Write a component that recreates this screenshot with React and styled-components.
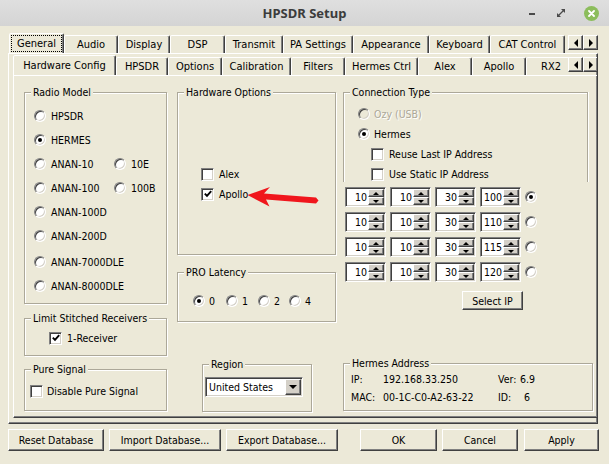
import styled, { createGlobalStyle, css } from 'styled-components';

const beige = '#ece9d8';

const GlobalStyle = createGlobalStyle`
  * { box-sizing: border-box; }
  html, body { margin: 0; padding: 0; background: ${beige}; }
  body {
    font-family: "DejaVu Sans Condensed", "DejaVu Sans", sans-serif;
    font-stretch: condensed;
    font-size: 10.5px;
    color: #000;
  }
`;

const sunken = css`
  border: 1px solid;
  border-color: #808080 #fff #fff #808080;
  box-shadow: inset 1px 1px 0 #404040, inset -1px -1px 0 #d4d0c8;
`;

const raised = css`
  border: 1px solid;
  border-color: #fff #404040 #404040 #fff;
  box-shadow: inset -1px -1px 0 #808080;
`;

const Window = styled.div`
  position: relative;
  width: 609px;
  height: 464px;
  display: flex;
  flex-direction: column;
  background: ${beige};
  overflow: hidden;
`;

const TitleBar = styled.div`
  flex: none;
  height: 26px;
  display: grid;
  grid-template-columns: 1fr auto 1fr;
  align-items: center;
  background: linear-gradient(#dfdfdf, #d4d4d4);
`;

const Title = styled.div`
  grid-column: 2;
  font-family: "Noto Sans", "DejaVu Sans", sans-serif;
  font-weight: 700;
  font-size: 13px;
  color: #3c3c3c;
`;

const WinButtons = styled.div`
  grid-column: 3;
  justify-self: end;
  display: flex;
  align-items: center;
  padding-right: 10px;
`;

const Minimize = styled.span`
  width: 6px;
  height: 2px;
  background: #4a4a4a;
  margin-right: 22px;
  margin-top: 2px;
`;

const CloseBall = styled.span`
  width: 15px;
  height: 15px;
  border-radius: 50%;
  background: #8cbd5c;
  margin-left: 19px;
  display: flex;
  align-items: center;
  justify-content: center;
`;

const Body = styled.div`
  flex: none;
  padding: 7px 11px 0 8px;
`;

const TabStrip = styled.div`
  position: relative;
  z-index: 1;
  display: flex;
  align-items: flex-end;
  height: 20px;
  padding-left: ${p => p.$inset || 0}px;
`;

const TabList = styled.div`
  display: flex;
  align-items: flex-end;
  width: ${p => p.$w}px;
  height: 100%;
  overflow: hidden;
  flex: none;
`;

const Tab = styled.div`
  flex: none;
  width: ${p => p.$w}px;
  height: ${p => (p.$active ? 21 : 18)}px;
  margin-bottom: ${p => (p.$active ? -1 : 0)}px;
  padding-bottom: ${p => (p.$active ? 2 : 0)}px;
  display: flex;
  align-items: center;
  justify-content: center;
  font-size: 11px;
  white-space: nowrap;
  background: ${beige};
  border: 1px solid;
  border-bottom: none;
  border-color: #fff #404040 transparent #fff;
  border-radius: 2px 2px 0 0;
  box-shadow: inset -1px 0 0 #808080;
  ${p =>
    p.$focus &&
    css`
      outline: 1px dotted #000;
      outline-offset: -3px;
    `}
`;

const ScrollArrows = styled.div`
  flex: none;
  display: flex;
  align-self: flex-start;
  margin: 2px 0 0 ${p => p.$gap || 0}px;
`;

const ArrowBtn = styled.div`
  width: 15px;
  height: 15px;
  background: ${beige};
  ${raised};
  display: flex;
  align-items: center;
  justify-content: center;
  &::after {
    content: '';
    border-top: 4px solid transparent;
    border-bottom: 4px solid transparent;
    ${p => (p.$dir === 'left' ? 'border-right' : 'border-left')}: 4px solid #000;
  }
`;

const OuterPanel = styled.div`
  height: 371px;
  ${raised};
  overflow: hidden;
  padding: 1px 0 0 4px;
`;

const InnerTabs = styled.div`
  width: 600px;
`;

const InnerPanel = styled.div`
  height: 343px;
  border: 1px solid;
  border-color: #fff #404040 #404040 #fff;
  box-shadow: inset -1px -1px 0 #808080;
  padding: 16px 0 0 10px;
  display: flex;
  align-items: flex-start;
`;

const Column = styled.div`
  flex: none;
  width: ${p => p.$w}px;
  margin-left: ${p => p.$ml || 0}px;
  display: flex;
  flex-direction: column;
  align-items: flex-start;
`;

const GroupBox = styled.div`
  width: ${p => (p.$w ? `${p.$w}px` : '100%')};
  height: ${p => p.$h}px;
  margin: ${p => p.$mt || 0}px 0 0 ${p => p.$ml || 0}px;
  border: 1px solid #aca899;
  box-shadow: inset 1px 1px 0 #fff, 1px 1px 0 #fff;
  ${p =>
    p.$open &&
    css`
      border-bottom: none;
      box-shadow: inset 1px 1px 0 #fff, 1px 0 0 #fff;
    `}
`;

const GroupTitle = styled.div`
  width: fit-content;
  margin: -7px 0 0 6px;
  padding: 0 2px;
  line-height: 13px;
  background: ${beige};
  white-space: nowrap;
`;

const Stack = styled.div`
  display: flex;
  flex-direction: column;
  padding: ${p => p.$pt || 0}px 0 0 ${p => p.$pl || 0}px;
  gap: ${p => p.$gap || 0}px;
`;

const Row = styled.div`
  display: flex;
  align-items: center;
  height: ${p => p.$h || 16}px;
  margin-top: ${p => p.$mt || 0}px;
  padding-left: ${p => p.$pl || 0}px;
`;

const Option = styled.label`
  flex: none;
  display: flex;
  align-items: center;
  gap: ${p => p.$gap ?? 5}px;
  width: ${p => (p.$w ? `${p.$w}px` : 'auto')};
  white-space: nowrap;
  color: ${p => (p.$disabled ? '#aca899' : '#000')};
  text-shadow: ${p => (p.$disabled ? '1px 1px 0 #fff' : 'none')};
`;

const RadioDot = styled.span`
  flex: none;
  width: 12px;
  height: 12px;
  border-radius: 50%;
  ${sunken};
  background: ${p => (p.$disabled ? beige : '#fff')};
  display: flex;
  align-items: center;
  justify-content: center;
  &::after {
    content: '';
    display: ${p => (p.$checked ? 'block' : 'none')};
    width: 4px;
    height: 4px;
    border-radius: 50%;
    background: #000;
  }
`;

const CheckSquare = styled.span`
  flex: none;
  width: 13px;
  height: 13px;
  ${sunken};
  background: #fff;
  display: flex;
  align-items: center;
  justify-content: center;
`;

const Radio = ({ label, checked, disabled, gap, w }) => (
  <Option $gap={gap} $w={w} $disabled={disabled}>
    <RadioDot $checked={checked} $disabled={disabled} />
    {label}
  </Option>
);

const Check = ({ label, checked, gap }) => (
  <Option $gap={gap}>
    <CheckSquare>
      {checked && (
        <svg width="8" height="8" viewBox="0 0 8 8">
          <path d="M0.8 3.6 L3 5.8 L7.2 1.2" fill="none" stroke="#000" strokeWidth="1.9" />
        </svg>
      )}
    </CheckSquare>
    {label}
  </Option>
);

const IpGrid = styled.div`
  display: flex;
  flex-direction: column;
  gap: 5px;
  margin: 5px 0 0 2px;
`;

const IpRow = styled.div`
  display: flex;
  align-items: center;
  gap: 4px;
  height: 20px;
`;

const Spin = styled.div`
  flex: none;
  width: 41px;
  height: 20px;
  ${sunken};
  background: #fff;
  padding: 1px;
  display: flex;
`;

const SpinValue = styled.span`
  flex: 1;
  text-align: right;
  line-height: 16px;
  padding-right: 1px;
`;

const SpinButtons = styled.div`
  width: 16px;
  display: flex;
  flex-direction: column;
`;

const SpinBtn = styled.div`
  flex: 1;
  background: #d4d0c8;
  ${raised};
  display: flex;
  align-items: center;
  justify-content: center;
  &::after {
    content: '';
    border-left: 3px solid transparent;
    border-right: 3px solid transparent;
    ${p => (p.$up ? 'border-bottom' : 'border-top')}: 3px solid #000;
  }
`;

const Spinner = ({ value }) => (
  <Spin>
    <SpinValue>{value}</SpinValue>
    <SpinButtons>
      <SpinBtn $up />
      <SpinBtn />
    </SpinButtons>
  </Spin>
);

const Button = styled.div`
  flex: none;
  width: ${p => p.$w}px;
  height: ${p => p.$h || 22}px;
  margin: ${p => p.$mt || 0}px 0 0 ${p => p.$ml || 0}px;
  ${raised};
  background: ${beige};
  display: flex;
  align-items: center;
  justify-content: center;
  white-space: nowrap;
`;

const Combo = styled.div`
  width: 98px;
  height: 20px;
  margin: 6px 0 0 2px;
  ${sunken};
  background: #fff;
  padding: 1px 1px 1px 3px;
  display: flex;
  align-items: center;
`;

const ComboText = styled.span`
  flex: 1;
  line-height: 16px;
`;

const ComboBtn = styled.div`
  width: 16px;
  height: 16px;
  background: #d4d0c8;
  ${raised};
  display: flex;
  align-items: center;
  justify-content: center;
  &::after {
    content: '';
    border-left: 4px solid transparent;
    border-right: 4px solid transparent;
    border-top: 4px solid #000;
  }
`;

const InfoRow = styled.div`
  display: flex;
  align-items: center;
  height: 18px;
  padding-left: 7px;
`;

const InfoCell = styled.span`
  flex: none;
  width: ${p => (p.$w ? `${p.$w}px` : 'auto')};
  white-space: nowrap;
`;

const ButtonBar = styled.div`
  flex: none;
  display: flex;
  justify-content: space-between;
  margin-top: 5px;
  padding: 0 10px 0 8px;
`;

const ButtonGroup = styled.div`
  display: flex;
  gap: 5px;
`;

const Annotation = styled.svg`
  position: absolute;
  left: 0;
  top: 0;
  pointer-events: none;
`;

const outerTabs = [
  ['General', 55],
  ['Audio', 54],
  ['Display', 52],
  ['DSP', 55],
  ['Transmit', 58],
  ['PA Settings', 70],
  ['Appearance', 76],
  ['Keyboard', 61],
  ['CAT Control', 75],
];

const innerTabs = [
  ['Hardware Config', 103],
  ['HPSDR', 52],
  ['Options', 54],
  ['Calibration', 69],
  ['Filters', 54],
  ['Hermes Ctrl', 73],
  ['Alex', 54],
  ['Apollo', 54],
  ['RX2', 50],
];

const ipRows = [
  ['100', true],
  ['110', false],
  ['115', false],
  ['120', false],
];

export default function App() {
  return (
    <>
      <GlobalStyle />
      <Window>
        <TitleBar>
          <Title>HPSDR Setup</Title>
          <WinButtons>
            <Minimize />
            <svg width="8" height="8" viewBox="0 0 8 8">
              <polygon points="4,0 8,0 8,4" fill="#4a4a4a" />
              <polygon points="0,4 0,8 4,8" fill="#4a4a4a" />
              <line x1="1.5" y1="6.5" x2="6.5" y2="1.5" stroke="#4a4a4a" strokeWidth="1.2" />
            </svg>
            <CloseBall>
              <svg width="7" height="7" viewBox="0 0 7 7">
                <path d="M1 1 L6 6 M6 1 L1 6" stroke="#fff" strokeWidth="1.8" strokeLinecap="round" />
              </svg>
            </CloseBall>
          </WinButtons>
        </TitleBar>

        <Body>
          <TabStrip $inset={1}>
            <TabList $w={556}>
              {outerTabs.map(([name, w], i) => (
                <Tab key={name} $w={w} $active={i === 0} $focus={i === 0}>
                  {name}
                </Tab>
              ))}
            </TabList>
            <ScrollArrows $gap={3}>
              <ArrowBtn $dir="left" />
              <ArrowBtn $dir="right" />
            </ScrollArrows>
          </TabStrip>

          <OuterPanel>
            <InnerTabs>
              <TabStrip>
                <TabList $w={555}>
                  {innerTabs.map(([name, w], i) => (
                    <Tab key={name} $w={w} $active={i === 0}>
                      {name}
                    </Tab>
                  ))}
                </TabList>
                <ScrollArrows>
                  <ArrowBtn $dir="left" />
                  <ArrowBtn $dir="right" />
                </ScrollArrows>
              </TabStrip>

              <InnerPanel>
                <Column $w={143}>
                  <GroupBox $h={212}>
                    <GroupTitle>Radio Model</GroupTitle>
                    <Stack $pt={5} $pl={9}>
                      <Row $h={24}><Radio label="HPSDR" /></Row>
                      <Row $h={24}><Radio label="HERMES" checked /></Row>
                      <Row $h={24}>
                        <Radio label="ANAN-10" w={80} />
                        <Radio label="10E" />
                      </Row>
                      <Row $h={24}>
                        <Radio label="ANAN-100" w={80} />
                        <Radio label="100B" />
                      </Row>
                      <Row $h={24}><Radio label="ANAN-100D" /></Row>
                      <Row $h={24}><Radio label="ANAN-200D" /></Row>
                      <Row $h={24} $mt={2}><Radio label="ANAN-7000DLE" /></Row>
                      <Row $h={24}><Radio label="ANAN-8000DLE" /></Row>
                    </Stack>
                  </GroupBox>

                  <GroupBox $h={38} $mt={14}>
                    <GroupTitle>Limit Stitched Receivers</GroupTitle>
                    <Row $mt={5} $pl={24}><Check label="1-Receiver" checked /></Row>
                  </GroupBox>

                  <GroupBox $h={42} $mt={13}>
                    <GroupTitle>Pure Signal</GroupTitle>
                    <Row $mt={7} $pl={5}><Check label="Disable Pure Signal" gap={4} /></Row>
                  </GroupBox>
                </Column>

                <Column $w={159} $ml={10}>
                  <GroupBox $h={163}>
                    <GroupTitle>Hardware Options</GroupTitle>
                    <Stack $pt={67} $pl={23} $gap={4}>
                      <Row><Check label="Alex" /></Row>
                      <Row><Check label="Apollo" checked /></Row>
                    </Stack>
                  </GroupBox>

                  <GroupBox $h={50} $mt={17}>
                    <GroupTitle>PRO Latency</GroupTitle>
                    <Row $mt={14} $pl={15}>
                      <Radio label="0" checked gap={4} w={33} />
                      <Radio label="1" gap={4} w={32} />
                      <Radio label="2" gap={4} w={31} />
                      <Radio label="4" gap={4} />
                    </Row>
                  </GroupBox>

                  <GroupBox $w={110} $h={48} $mt={42} $ml={25}>
                    <GroupTitle>Region</GroupTitle>
                    <Combo>
                      <ComboText>United States</ComboText>
                      <ComboBtn />
                    </Combo>
                  </GroupBox>
                </Column>

                <Column $w={250} $ml={7}>
                  <GroupBox $w={245} $h={90} $open>
                    <GroupTitle>Connection Type</GroupTitle>
                    <Stack $pt={5} $pl={14}>
                      <Row $h={20}><Radio label="Ozy (USB)" disabled gap={4} /></Row>
                      <Row $h={20}><Radio label="Hermes" checked gap={4} /></Row>
                      <Row $h={20} $pl={13}><Check label="Reuse Last IP Address" gap={5} /></Row>
                      <Row $h={20} $pl={13}><Check label="Use Static IP Address" gap={5} /></Row>
                    </Stack>
                  </GroupBox>

                  <IpGrid>
                    {ipRows.map(([last, on]) => (
                      <IpRow key={last}>
                        <Spinner value="10" />
                        <Spinner value="10" />
                        <Spinner value="30" />
                        <Spinner value={last} />
                        <Radio label="" checked={on} gap={0} />
                      </IpRow>
                    ))}
                  </IpGrid>

                  <Button $w={61} $h={19} $mt={9} $ml={119}>Select IP</Button>

                  <GroupBox $h={48} $mt={53}>
                    <GroupTitle>Hermes Address</GroupTitle>
                    <InfoRow>
                      <InfoCell $w={32}>IP:</InfoCell>
                      <InfoCell $w={115}>192.168.33.250</InfoCell>
                      <InfoCell $w={22}>Ver:</InfoCell>
                      <InfoCell>6.9</InfoCell>
                    </InfoRow>
                    <InfoRow>
                      <InfoCell $w={32}>MAC:</InfoCell>
                      <InfoCell $w={115}>00-1C-C0-A2-63-22</InfoCell>
                      <InfoCell $w={26}>ID:</InfoCell>
                      <InfoCell>6</InfoCell>
                    </InfoRow>
                  </GroupBox>
                </Column>
              </InnerPanel>
            </InnerTabs>
          </OuterPanel>
        </Body>

        <ButtonBar>
          <ButtonGroup>
            <Button $w={96}>Reset Database</Button>
            <Button $w={112}>Import Database...</Button>
            <Button $w={112}>Export Database...</Button>
          </ButtonGroup>
          <ButtonGroup>
            <Button $w={77}>OK</Button>
            <Button $w={76}>Cancel</Button>
            <Button $w={75} $ml={1}>Apply</Button>
          </ButtonGroup>
        </ButtonBar>

        <Annotation width="609" height="464" viewBox="0 0 609 464">
          <polygon
            points="247.5,195 270,187 264,193.5 316,197.5 318.5,200.5 316,203.5 266,199.5 269.5,206.5"
            fill="#f0161c"
          />
        </Annotation>
      </Window>
    </>
  );
}
